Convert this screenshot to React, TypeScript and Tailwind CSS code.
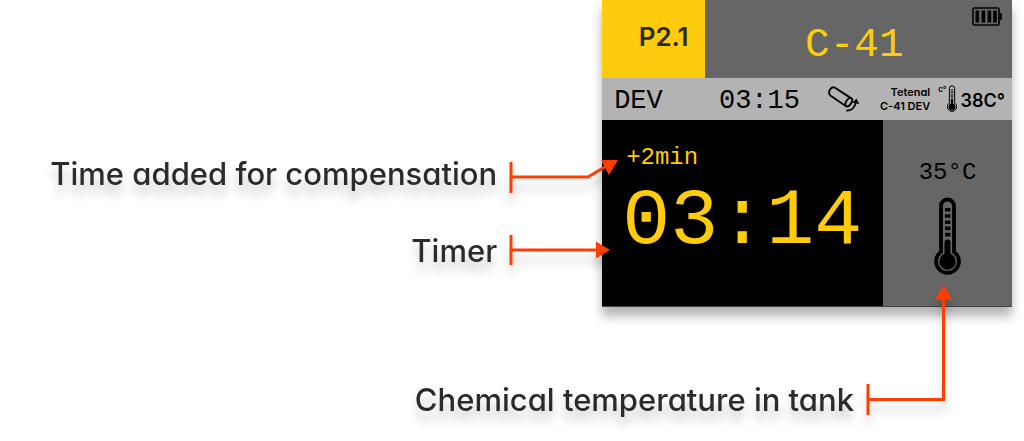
import type { ReactNode } from "react";

const MONO = "font-['Liberation_Mono',monospace]";
const SANS = "font-['Inter',sans-serif] [font-feature-settings:'cv11']";

function BatteryIcon() {
  return (
    <svg width="30" height="19" viewBox="0 0 30 19" aria-hidden="true">
      <rect x="1" y="1" width="26" height="17" rx="1.5" fill="none" stroke="#000" strokeWidth="1.6" />
      <path d="M27.5 6h1.2q1.3 0 1.3 1.4v4.2q0 1.4-1.3 1.4h-1.2z" />
      <path d="M3.5 3.5h3.6v12H3.5zM9.6 3.5h3.6v12H9.6zM15.6 3.5h3.6v12h-3.6zM21.2 3.5h3.6v12h-3.6z" />
    </svg>
  );
}

function TubeIcon() {
  return (
    <svg width="32" height="26" viewBox="0 0 32 26" fill="none" stroke="#000" strokeWidth="1.9" aria-hidden="true">
      <path d="M6.6 1.5 23.4 12.4M2 9.2 18 20.2M6.6 1.5C3.2 0-.6 5.6 2 9.2" />
      <ellipse cx="20.8" cy="16.2" rx="2.6" ry="4.7" transform="rotate(32 20.8 16.2)" />
      <path d="M18.2 24.6c5 .2 8.8-3 9.6-8.2" />
      <path d="M28.4 12.4 31.4 18 24.4 16.8z" fill="#000" stroke="none" />
    </svg>
  );
}

function SmallThermometerIcon() {
  return (
    <svg width="10" height="28" viewBox="0 0 10 28" aria-hidden="true">
      <path d="M2.4 18V3.4a2.6 2.6 0 0 1 5.2 0V18a4.6 4.6 0 1 1-5.2 0z" fill="none" stroke="#000" />
      <circle cx="5" cy="22" r="3.4" />
      <path d="M5 22V15" stroke="#000" strokeWidth="2.2" />
      <path d="M5 4.4V15" stroke="#000" strokeWidth="2.4" strokeDasharray="1.2 1.2" />
    </svg>
  );
}

function ThermometerIcon() {
  return (
    <svg width="27" height="78" viewBox="0 0 27 78" aria-hidden="true">
      <path
        d="M7 55V9a6.5 6.5 0 0 1 13 0v46a11.4 11.4 0 1 1-13 0z"
        fill="none"
        stroke="#000"
        strokeWidth="3.8"
      />
      <circle cx="13.5" cy="64.5" r="8.200" />
      <path d="M13.5 64V45.500" stroke="#000" strokeWidth="6" strokeLinecap="round" />
      <path d="M11 11h5.400v3.600H11zM11 17.200h5.400v3.600H11zM11 23.400h5.400V27H11zM11 29.600h5.400v3.600H11zM11 35.800h5.400v3.600H11z" />
    </svg>
  );
}

function Callout({ label, children }: { label: string; children: ReactNode }) {
  return (
    <div className="flex items-center justify-end gap-3 drop-shadow-[0_10px_5px_rgba(0,0,0,0.2)]">
      <p className={`${SANS} text-right text-[31px] leading-[31px] font-medium whitespace-nowrap text-[#2b2b2b]`}>
        {label}
      </p>
      {children}
    </div>
  );
}

function Device() {
  return (
    <section className="w-[40.5%] shrink-0 bg-[#666] shadow-[0_9px_10px_rgba(0,0,0,0.3)]">
      <header className="flex h-[78px]">
        <div className="flex w-1/4 items-center justify-end bg-[#ffcc0d] pr-4 pb-1">
          <span className={`${SANS} text-[26px] leading-[30px] font-semibold text-[#2b2b2b]`}>P2.1</span>
        </div>
        <div className="relative flex flex-1 items-center justify-center pt-3 pr-2">
          <h1 className={`${MONO} text-[41px] leading-none text-[#ffcc0d]`}>C-41</h1>
          <div className="absolute top-[7px] right-[10px]">
            <BatteryIcon />
          </div>
        </div>
      </header>

      <div className="flex h-[42px] items-center bg-[#b3b3b3] pr-[7px] pl-3 text-black">
        <span className={`${MONO} mr-auto pt-1 text-[27px] leading-none`}>DEV</span>
        <span className={`${MONO} pt-1 text-[27px] leading-none`}>03:15</span>
        <div className="ml-7">
          <TubeIcon />
        </div>
        <p className={`${SANS} ml-5 text-right text-[11px] leading-[14px] font-semibold whitespace-nowrap`}>
          Tetenal
          <br />
          C-41 DEV
        </p>
        <div className="ml-2 flex items-center">
          <span className={`${SANS} self-start text-[8px] leading-[8px] font-semibold`}>c°</span>
          <SmallThermometerIcon />
          <span className={`${SANS} ml-1 pt-1 text-[18px] leading-6 font-semibold`}>38C°</span>
        </div>
      </div>

      <div className="flex h-[187px] border-b border-[#444]">
        <div className={`${MONO} flex-1 bg-black pt-[26px] pl-6 text-[#ffcc0d]`}>
          <p className="text-[24px] leading-6">+2min</p>
          <p className="mt-3 -ml-1 text-[80px] leading-[80px]">03:14</p>
        </div>
        <div className="flex w-[129px] flex-col items-center pt-[41px] text-black">
          <span className={`${MONO} text-[24px] leading-6`}>35°C</span>
          <div className="mt-3">
            <ThermometerIcon />
          </div>
        </div>
      </div>
    </section>
  );
}

export default function App() {
  return (
    <main className="bg-white pb-6">
      <div className="flex pr-3">
        <div className="z-10 flex flex-1 flex-col gap-[42px] pt-[154px]">
          <Callout label="Time added for compensation">
            <svg width="93" height="39" className="shrink-0 overflow-visible" aria-hidden="true">
              <path d="M2 8v31M2 23h77l20-12" fill="none" stroke="#ff3d00" strokeWidth="3" />
              <path d="M92 6h17l-9 15z" fill="#ff3d00" />
            </svg>
          </Callout>
          <Callout label="Timer">
            <svg width="93" height="31" className="shrink-0 overflow-visible" aria-hidden="true">
              <path d="M2 0v30M2 15h87" fill="none" stroke="#ff3d00" strokeWidth="3" />
              <path d="M87 6.5 101 15 87 23.5z" fill="#ff3d00" />
            </svg>
          </Callout>
        </div>
        <Device />
      </div>
      <div className="relative z-10 pt-[77px] pr-20">
        <Callout label="Chemical temperature in tank">
          <svg width="78" height="31" className="shrink-0 overflow-visible" aria-hidden="true">
            <path d="M2 0v31M2 15.5h75.5V-86" fill="none" stroke="#ff3d00" strokeWidth="3" />
            <path d="M77.5-99 69-84.5h17z" fill="#ff3d00" />
          </svg>
        </Callout>
      </div>
    </main>
  );
}
